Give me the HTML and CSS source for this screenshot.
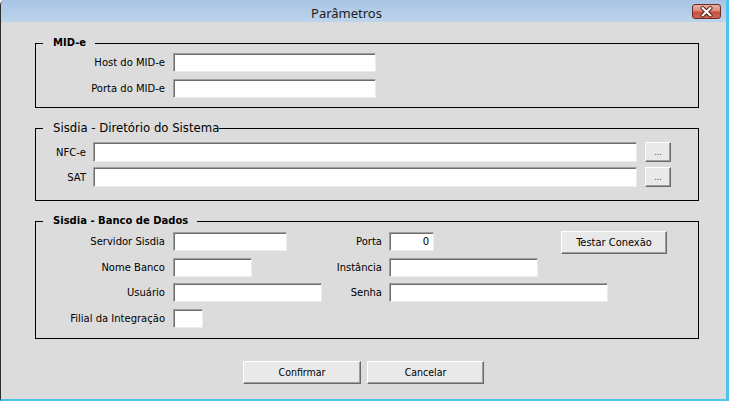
FILE: index.html
```html
<!DOCTYPE html>
<html lang="pt">
<head>
<meta charset="utf-8">
<title>Parâmetros</title>
<link rel="stylesheet" href="styles.css">
</head>
<body>
<div class="window">
  <div class="titlebar">
    <div class="title">Parâmetros</div>
    <div class="close">
      <svg width="27" height="13" viewBox="0 0 27 13">
        <path d="M9.5 3 L17.5 10.5 M17.5 3 L9.5 10.5" stroke="#4a1a14" stroke-width="4" stroke-linecap="round"/>
        <path d="M9.5 3 L17.5 10.5 M17.5 3 L9.5 10.5" stroke="#ffffff" stroke-width="2.2" stroke-linecap="round"/>
      </svg>
    </div>
  </div>
  <div class="content">
    <fieldset class="group g1">
      <legend class="lg-bold">MID-e</legend>
      <div class="grid grid1">
        <div class="lbl">Host do MID-e</div><div class="tb w203"></div>
        <div class="lbl">Porta do MID-e</div><div class="tb w203"></div>
      </div>
    </fieldset>
    <fieldset class="group g2">
      <legend class="lg-cond">Sisdia - Diretório do Sistema</legend>
      <div class="grid grid2">
        <div class="lbl lbl7">NFC-e</div><div class="tb tb20 w544"></div><div class="btn dots">...</div>
        <div class="lbl lbl7">SAT</div><div class="tb tb20 w544"></div><div class="btn dots">...</div>
      </div>
    </fieldset>
    <fieldset class="group g3">
      <legend class="lg-bold">Sisdia - Banco de Dados</legend>
      <div class="grid grid3">
        <div class="lbl">Servidor Sisdia</div><div class="tb w114"></div>
        <div class="lbl lbl7">Porta</div><div class="tb w45 num">0</div>
        <div class="btn test">Testar Conexão</div>

        <div class="lbl">Nome Banco</div><div class="tb w79"></div>
        <div class="lbl lbl7">Instância</div><div class="tb w149"></div>
        <div></div>

        <div class="lbl">Usuário</div><div class="tb w149"></div>
        <div class="lbl lbl7">Senha</div><div class="tb w219 span2"></div>

        <div class="lbl">Filial da Integração</div><div class="tb w30"></div>
      </div>
    </fieldset>
    <div class="actions">
      <div class="btn big w118">Confirmar</div>
      <div class="btn big w117">Cancelar</div>
    </div>
  </div>
</div>
</body>
</html>
```
FILE: styles.css
```css
* { box-sizing: border-box; }
html, body { margin: 0; padding: 0; }
body {
  width: 729px;
  height: 401px;
  overflow: hidden;
  background: #ffffff;
  font-family: "DejaVu Sans", sans-serif;
  font-size: 10px;
  color: #000;
}
.window {
  width: 729px;
  height: 401px;
  display: flex;
  flex-direction: column;
  background: #dcdcdc;
  border-left: 1px solid #2e2e2e;
  border-right: 3px solid #4cc3ef;
  border-bottom: 2px solid #4cc3ef;
  border-top-left-radius: 5px;
  overflow: hidden;
}
.titlebar {
  height: 22px;
  flex: none;
  display: flex;
  background: linear-gradient(#a8c4e5, #bdd4ec);
}
.title {
  flex: 1;
  text-align: center;
  font-family: "Noto Sans", sans-serif;
  font-size: 13px;
  line-height: 22px;
  padding-top: 2px;
  color: #1c1c1c;
}
.close {
  width: 29px;
  height: 15px;
  margin: 4px 5px 0 0;
  border: 1px solid #6e2b24;
  border-radius: 3px;
  background: linear-gradient(#e9b0a3 0%, #dc8a7a 45%, #c74d3d 55%, #d0664f 100%);
  display: flex;
  align-items: center;
  justify-content: center;
}
.close svg { display: block; }
.content {
  flex: 1;
  display: flex;
  flex-direction: column;
  padding: 14px 27px 0 34px;
}
fieldset.group {
  margin: 0;
  border: 1px solid #000;
  min-width: 0;
}
.group + .group { margin-top: 13px; }
legend {
  margin-left: 7px;
  padding: 0 9px 0 10px;
  line-height: 14px;
  height: 14px;
}
.lg-bold { font-weight: bold; font-size: 10px; }
.lg-cond {
  font-family: "DejaVu Sans Condensed", "DejaVu Sans", sans-serif;
  font-stretch: condensed;
  font-size: 13px;
  padding-right: 0;
}
.g1 { padding: 3px 0 9px; }
.g2 { padding: 7px 0 13px; }
.g3 { padding: 4px 0 10px; }
.grid { display: grid; }
.grid1 {
  grid-template-columns: 137px 203px;
  grid-auto-rows: 19px;
  row-gap: 7px;
}
.grid2 {
  grid-template-columns: 57px 552px 26px;
  grid-auto-rows: 20px;
  row-gap: 5px;
}
.grid3 {
  grid-template-columns: 137px 157px 59px 172px 106px;
  grid-auto-rows: 19px;
  row-gap: 6.5px;
}
.lbl {
  text-align: right;
  padding-right: 8px;
  align-self: center;
  white-space: nowrap;
}
.lbl7 { padding-right: 7px; }
.tb {
  height: 19px;
  background: #fff;
  border: 1px solid;
  border-color: #a0a0a0 #ececec #ececec #a0a0a0;
  box-shadow: inset 1px 1px 0 #6d6d6d;
}
.tb20 { height: 20px; }
.num { text-align: right; padding-right: 4px; line-height: 17px; }
.span2 { grid-column: span 2; }
.w30 { width: 30px; }
.w45 { width: 45px; }
.w79 { width: 79px; }
.w114 { width: 114px; }
.w149 { width: 149px; }
.w203 { width: 203px; }
.w219 { width: 219px; }
.w544 { width: 544px; }
.btn {
  background: #e9e9e9;
  border: 1px solid;
  border-color: #ffffff #696969 #696969 #ffffff;
  box-shadow: inset -1px -1px 0 #a0a0a0;
  display: flex;
  align-items: center;
  justify-content: center;
  font-family: "DejaVu Sans Condensed", "DejaVu Sans", sans-serif;
  font-stretch: condensed;
  white-space: nowrap;
}
.dots {
  height: 20px;
  align-items: flex-end;
  padding-bottom: 4px;
  font-size: 9px;
  line-height: 9px;
  color: #444;
}
.test {
  height: 23px;
  margin-top: -1px;
  font-size: 11px;
}
.actions {
  display: flex;
  justify-content: center;
  gap: 6px;
  margin: 22px -27px 0 -34px;
}
.big { height: 23px; font-size: 10.5px; }
.w118 { width: 118px; }
.w117 { width: 117px; }
```
